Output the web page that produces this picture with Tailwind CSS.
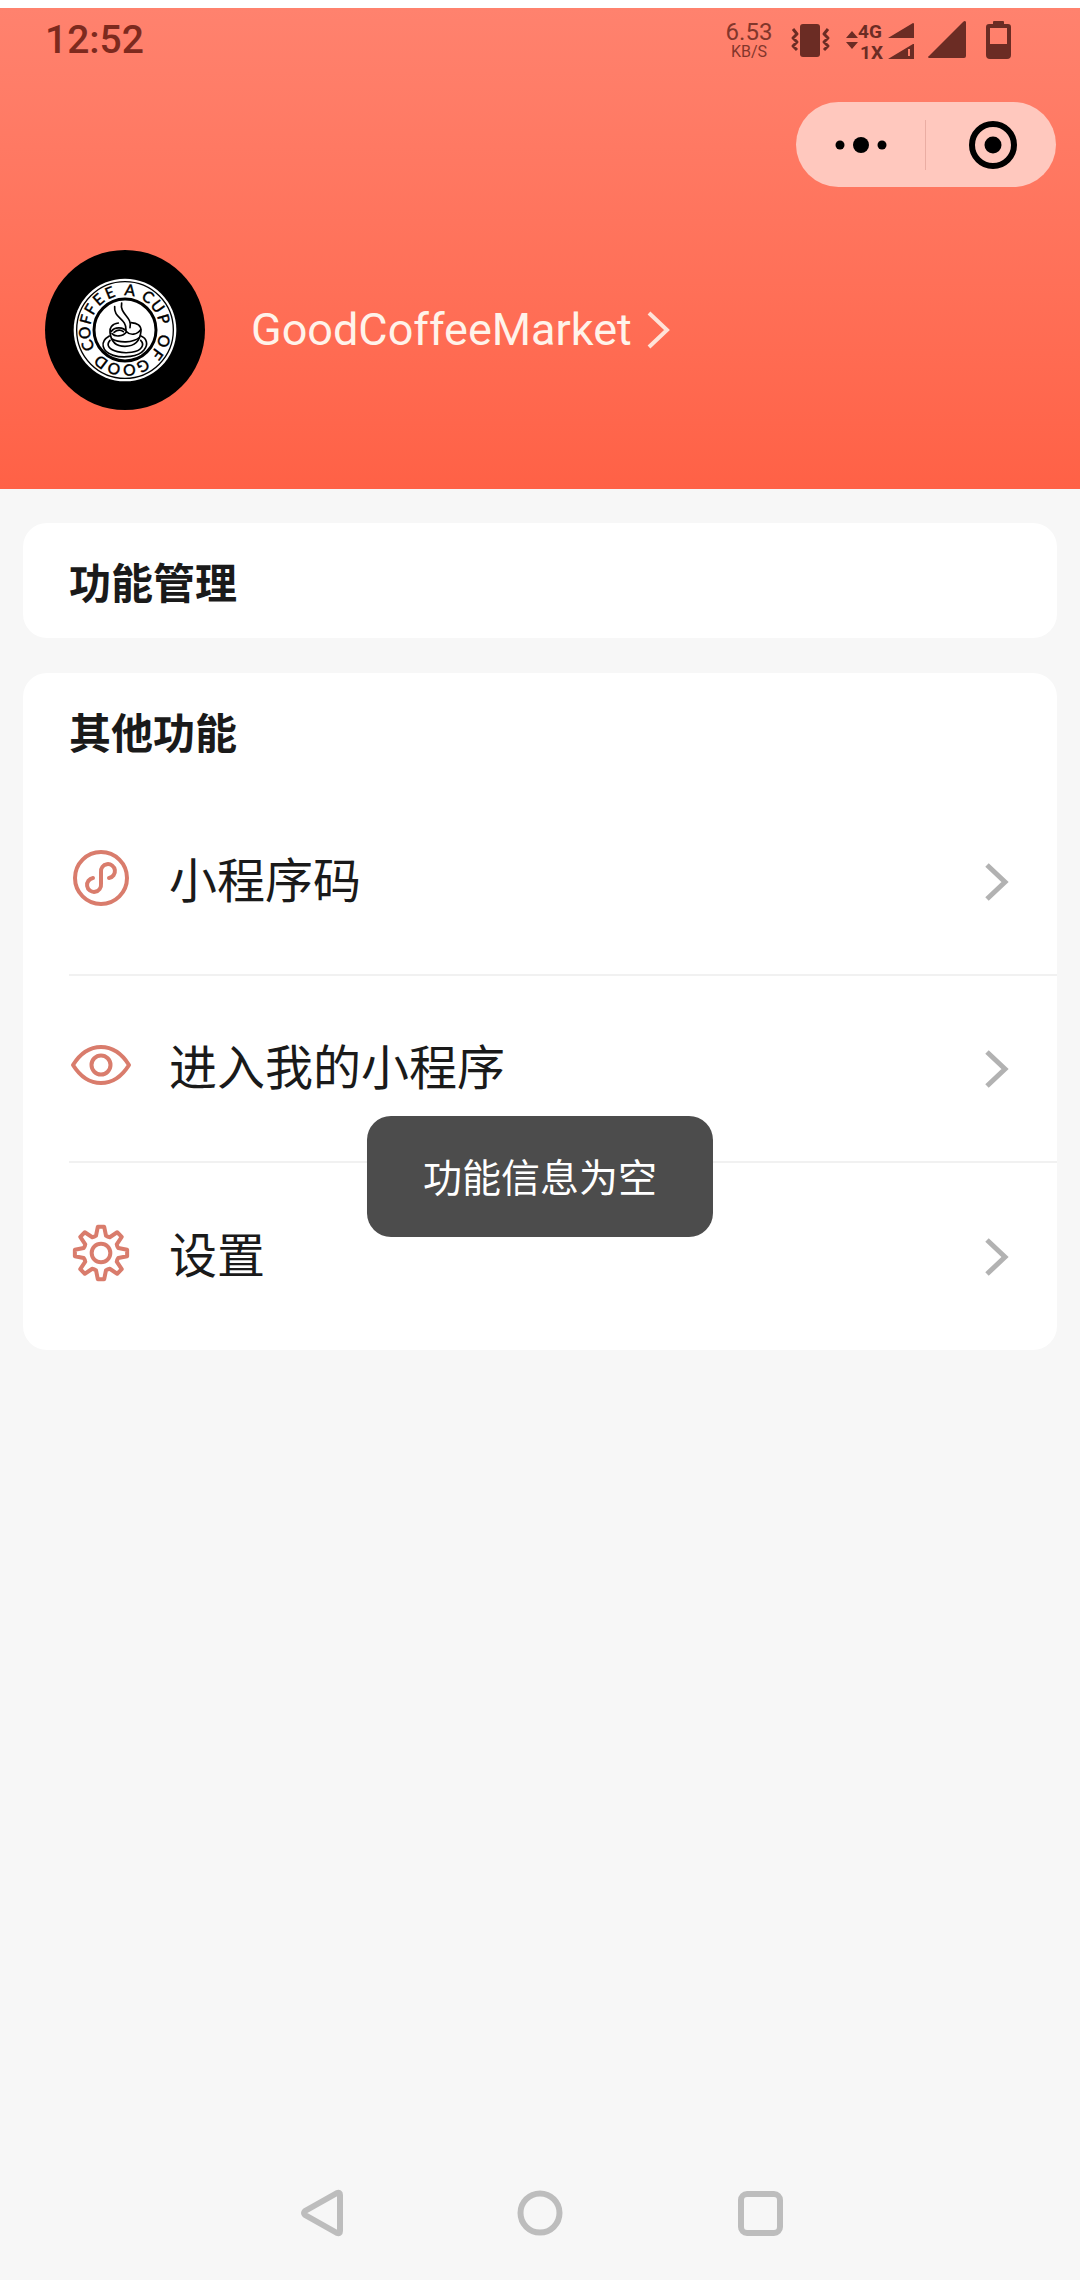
<!DOCTYPE html>
<html lang="zh-CN">
<head>
  <meta charset="UTF-8" />
  <meta name="viewport" content="width=device-width, initial-scale=1.0"/>
  <title>GoodCoffeeMarket</title>
  <script src="https://cdn.jsdelivr.net/npm/@tailwindcss/browser@4"></script>
</head>
<body class="bg-[#f7f7f7] font-[Roboto,'Noto_Sans_CJK_SC',sans-serif] text-[#1a1a1a]">
  <div class="flex min-h-screen flex-col">

    <!-- Header -->
    <header class="border-t-8 border-white bg-linear-to-b from-[#ff826e] to-[#ff6146] pb-[79px]">
      <!-- Status bar -->
      <div class="flex h-16 items-center justify-between pr-[69px] pl-[45px] text-[#6b2c24]">
        <span class="text-[39px] leading-none font-medium text-[#7d2a1e]">12:52</span>
        <div class="flex items-center gap-3">
          <div class="flex w-11 flex-col items-center text-[#82362b]">
            <span class="text-2xl leading-6">6.53</span>
            <span class="text-base leading-4">KB/S</span>
          </div>
          <svg class="h-10 w-[51px]" viewBox="0 0 51 40" fill="none" stroke="currentColor" stroke-width="3" stroke-linejoin="round">
            <rect x="17" y="4" width="20" height="33" rx="3" fill="currentColor" stroke="none"/>
            <path d="M10 9l4 5-4 4 4 4-4 4 4 4M45 9l-4 5 4 4-4 4 4 4-4 4"/>
          </svg>
          <svg class="h-12 w-[68px]" viewBox="0 -4 68 48" fill="currentColor">
            <path d="M0 18l6-7 6 7zM0 22h12l-6 7z"/>
            <text x="12" y="18" font-size="19" font-weight="700" font-family="Roboto">4G</text>
            <text x="14" y="39" font-size="19" font-weight="700" font-family="Roboto">1X</text>
            <path d="M42 18L67 3q1 0 1 1v14zM68 24v15H42l25-15zM62 29v7h2v-7z" fill-rule="evenodd"/>
          </svg>
          <svg class="h-10 w-12" viewBox="0 0 48 40" fill="currentColor">
            <path d="M3 38q-2-1 0-2L37 2q2-2 3 0v34q0 2-2 2z"/>
          </svg>
          <svg class="h-10 w-[25px]" viewBox="0 0 25 40" fill="currentColor">
            <path d="M7 4V2q0-1 1-1h9q1 0 1 1v2h4q3 0 3 3v28q0 4-4 4H4q-4 0-4-4V7q0-3 3-3zM4 8v16h17V8z" fill-rule="evenodd"/>
          </svg>
        </div>
      </div>

      <!-- Capsule -->
      <div class="mt-[30px] mr-6 ml-auto flex h-[85px] w-[260px] items-center rounded-full bg-[#ffc8be] text-black">
        <button type="button" aria-label="更多" class="flex w-[129px] justify-center">
          <svg class="h-5 w-[52px]" viewBox="0 0 52 20" fill="currentColor">
            <circle cx="5" cy="10" r="4.5"/><circle cx="26" cy="10" r="8"/><circle cx="47" cy="10" r="4.5"/>
          </svg>
        </button>
        <span class="h-[50px] w-px bg-[#eaada3]"></span>
        <button type="button" aria-label="关闭" class="flex flex-1 justify-center pl-1">
          <svg class="size-12" viewBox="0 0 48 48">
            <circle cx="24" cy="24" r="21" fill="none" stroke="currentColor" stroke-width="6"/>
            <circle cx="24" cy="24" r="8.5" fill="currentColor"/>
          </svg>
        </button>
      </div>

      <!-- Profile -->
      <a href="#profile" class="mt-[63px] flex items-center px-[45px] text-[#fff3ea]">
        <svg class="size-40 shrink-0" viewBox="45 45 480 480" role="img" aria-label="Logo">
          <circle cx="285" cy="285" r="240" fill="#000"/>
          <circle cx="285" cy="285" r="154" fill="#fff"/>
          <circle cx="285" cy="285" r="145" fill="none" stroke="#000" stroke-width="4"/>
          <circle cx="285" cy="285" r="93" fill="none" stroke="#000" stroke-width="9"/>
          <g font-family="Lato" font-size="47" font-weight="500" text-anchor="middle" fill="#000" stroke="#000" stroke-width="1">
            <text x="285" y="181" transform="rotate(-113 285 285)">C</text>
            <text x="285" y="181" transform="rotate(-94 285 285)">O</text>
            <text x="285" y="181" transform="rotate(-75 285 285)">F</text>
            <text x="285" y="181" transform="rotate(-59 285 285)">F</text>
            <text x="285" y="181" transform="rotate(-41 285 285)">E</text>
            <text x="285" y="181" transform="rotate(-22 285 285)">E</text>
            <text x="285" y="181" transform="rotate(7 285 285)">A</text>
            <text x="285" y="181" transform="rotate(35 285 285)">C</text>
            <text x="285" y="181" transform="rotate(54 285 285)">U</text>
            <text x="285" y="181" transform="rotate(74 285 285)">P</text>
            <text x="285" y="181" transform="rotate(106 285 285)">O</text>
            <text x="285" y="181" transform="rotate(127 285 285)">F</text>
            <text x="285" y="181" transform="rotate(153 285 285)">G</text>
            <text x="285" y="181" transform="rotate(174 285 285)">O</text>
            <text x="285" y="181" transform="rotate(196 285 285)">O</text>
            <text x="285" y="181" transform="rotate(217 285 285)">D</text>
          </g>
          <g fill="none" stroke="#000" stroke-width="5" stroke-linecap="round">
            <path d="M254 215C250 250 290 250 288 285M275 204C268 238 308 245 300 278"/>
            <path d="M265 264C245 266 238 280 240 292C243 322 258 334 285 334S330 320 333 288C334 272 322 264 303 263"/>
            <path d="M243 290C255 274 280 276 290 290C300 302 322 300 332 284M290 290C278 306 255 306 246 296M252 292C262 284 272 284 280 290M246 312C268 324 308 324 328 308"/>
            <path d="M238 303C208 320 215 350 250 361C280 370 325 366 342 345C356 328 350 310 333 303M240 316C226 332 240 344 262 350C290 357 325 352 334 338C340 330 338 322 332 316"/>
          </g>
        </svg>
        <span class="ml-[46px] text-[45px] leading-[60px]">GoodCoffeeMarket</span>
        <svg class="ml-3 h-10 w-7" viewBox="0 0 28 40" fill="none" stroke="#ffe3d8" stroke-width="4">
          <path d="M5 3l18 17L5 37"/>
        </svg>
      </a>
    </header>

    <!-- Content -->
    <main class="flex flex-1 flex-col gap-[35px] px-[23px] pt-[34px]">
      <section class="rounded-3xl bg-white px-[46px] pt-8 pb-[23px]">
        <h2 class="text-[42px] leading-[60px] font-bold">功能管理</h2>
      </section>

      <section class="rounded-3xl bg-white pl-[46px]">
        <h2 class="pt-8 pb-6 text-[42px] leading-[60px] font-bold">其他功能</h2>
        <nav class="flex flex-col divide-y-2 divide-[#f1f1f1] text-5xl">
          <a href="#code" class="flex h-[187px] items-center pr-[46px]">
            <svg class="size-16 -translate-y-1" viewBox="0 0 64 64" fill="none" stroke="#d97c6c" stroke-width="4" stroke-linecap="round">
              <circle cx="32" cy="32" r="26"/>
              <path d="M24 32a7 7 0 1 0 8 6V26a7 7 0 1 1 8 6"/>
            </svg>
            <span class="ml-9 flex-1">小程序码</span>
            <svg class="h-10 w-7" viewBox="0 0 28 40" fill="none" stroke="#b2b2b2" stroke-width="5"><path d="M4 3l18 17L4 37"/></svg>
          </a>
          <a href="#shop" class="flex h-[187px] items-center pr-[46px]">
            <svg class="size-16 -translate-y-1" viewBox="0 0 64 64" fill="none" stroke="#d97c6c" stroke-width="4" stroke-linejoin="round">
              <path d="M4 32C19 8 45 8 60 32C45 56 19 56 4 32z"/>
              <circle cx="32" cy="32" r="9.5"/>
            </svg>
            <span class="ml-9 flex-1">进入我的小程序</span>
            <svg class="h-10 w-7" viewBox="0 0 28 40" fill="none" stroke="#b2b2b2" stroke-width="5"><path d="M4 3l18 17L4 37"/></svg>
          </a>
          <a href="#settings" class="flex h-[187px] items-center pr-[46px]">
            <svg class="size-16 -translate-y-1" viewBox="-96 -96 192 192" fill="none" stroke="#d97c6c" stroke-width="12" stroke-linejoin="round">
              <path d="M-14.9-51.9L-9.6-78.4H9.6L14.9-51.9Q19.9-48 26.2-47.2L48.6-62.2L62.2-48.6L47.2-26.2Q48-19.9 51.9-14.9L78.4-9.6V9.6L51.9 14.9Q48 19.9 47.2 26.2L62.2 48.6L48.6 62.2L26.2 47.2Q19.9 48 14.9 51.9L9.6 78.4H-9.6L-14.9 51.9Q-19.9 48-26.2 47.2L-48.6 62.2L-62.2 48.6L-47.2 26.2Q-48 19.9-51.9 14.9L-78.4 9.6V-9.6L-51.9-14.9Q-48-19.9-47.2-26.2L-62.2-48.6L-48.6-62.2L-26.2-47.2Q-19.9-48-14.9-51.9z"/>
              <circle r="28"/>
            </svg>
            <span class="ml-9 flex-1">设置</span>
            <svg class="h-10 w-7" viewBox="0 0 28 40" fill="none" stroke="#b2b2b2" stroke-width="5"><path d="M4 3l18 17L4 37"/></svg>
          </a>
        </nav>
      </section>
    </main>

    <!-- System navigation -->
    <footer class="flex h-[134px] items-center justify-center gap-40 text-[#bdbdbd]">
      <button type="button" aria-label="返回">
        <svg class="size-15" viewBox="0 0 60 60" fill="none" stroke="currentColor" stroke-width="6" stroke-linejoin="round"><path d="M50 12q0-3-3-2L15 28q-2 2 0 4l32 18q3 1 3-2z"/></svg>
      </button>
      <button type="button" aria-label="主页">
        <svg class="size-15" viewBox="0 0 60 60" fill="none" stroke="currentColor" stroke-width="6"><circle cx="30" cy="30" r="19.5"/></svg>
      </button>
      <button type="button" aria-label="最近任务">
        <svg class="size-15" viewBox="0 0 60 60" fill="none" stroke="currentColor" stroke-width="6"><rect x="11" y="11" width="39" height="39" rx="6"/></svg>
      </button>
    </footer>
  </div>

  <!-- Toast -->
  <div role="status" class="absolute top-[1116px] left-1/2 -translate-x-1/2 rounded-3xl bg-[#4c4c4c] px-14 pt-[35px] pb-[29px] text-[39px] leading-[57px] whitespace-nowrap text-white">功能信息为空</div>
</body>
</html>
